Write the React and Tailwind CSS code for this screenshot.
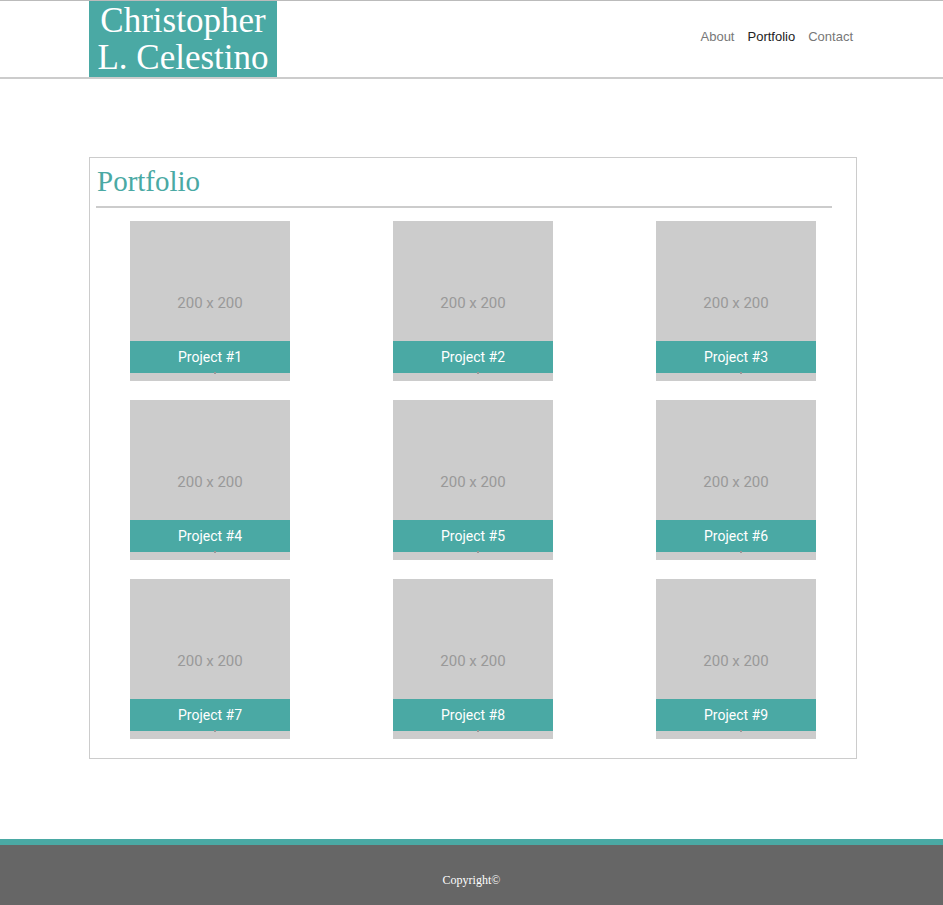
const projects = [1, 2, 3, 4, 5, 6, 7, 8, 9];

const sans = { fontFamily: '"Liberation Sans", Arial, sans-serif' };
const roboto = { fontFamily: 'Roboto, "Liberation Sans", Arial, sans-serif' };
const serif = { fontFamily: '"Liberation Serif", Georgia, serif' };

function ProjectTile({ n }) {
  return (
    <div className="relative h-[160px] w-[160px] bg-[#cccccc]">
      <div className="flex h-[120px] items-end justify-center pb-[27px] text-[15px] text-[#999999]" style={roboto}>
        200 x 200
      </div>
      <div className="flex h-[32px] items-center justify-center bg-[#4aa9a4] text-[14px] text-white" style={roboto}>
        Project #{n}
      </div>
      <div className="absolute left-[84px] top-[151px] h-[2px] w-[2px] bg-[#999999]" />
    </div>
  );
}

export default function App() {
  return (
    <div className="min-h-screen bg-white">
      <header className="border-t border-[#bbbbbb] border-b-2 border-b-[#cccccc]">
        <div className="ml-[89px] flex w-[768px] items-center justify-between">
          <div className="h-[76px] w-[188px] whitespace-nowrap bg-[#4aa9a4] pt-[1px] text-center text-[35px] leading-[37px] text-white" style={serif}>
            Christopher
            <br />
            L. Celestino
          </div>
          <nav className="mb-[4px] mr-[4px] flex gap-[13px] text-[13px]" style={sans}>
            <a className="text-[#777777]">About</a>
            <a className="text-[#222222]">Portfolio</a>
            <a className="text-[#777777]">Contact</a>
          </nav>
        </div>
      </header>

      <main className="pb-[80px] pt-[78px]">
        <section className="ml-[89px] w-[768px] border border-[#cccccc] pb-[19px]">
          <h1 className="ml-[7px] mt-[7px] text-[29px] leading-[32px] text-[#4aa9a4]" style={serif}>
            Portfolio
          </h1>
          <hr className="ml-[6px] mt-[9px] w-[736px] border-t-2 border-[#cccccc]" />
          <div className="ml-[40px] mt-[13px] grid w-[686px] grid-cols-[160px_160px_160px] justify-between gap-y-[19px]">
            {projects.map((n) => (
              <ProjectTile key={n} n={n} />
            ))}
          </div>
        </section>
      </main>

      <footer className="border-t-[6px] border-[#4aa9a4] bg-[#666666]">
        <div className="flex h-[60px] items-center justify-center pt-[10px] text-[12px] text-white" style={serif}>
          Copyright©
        </div>
      </footer>
    </div>
  );
}
